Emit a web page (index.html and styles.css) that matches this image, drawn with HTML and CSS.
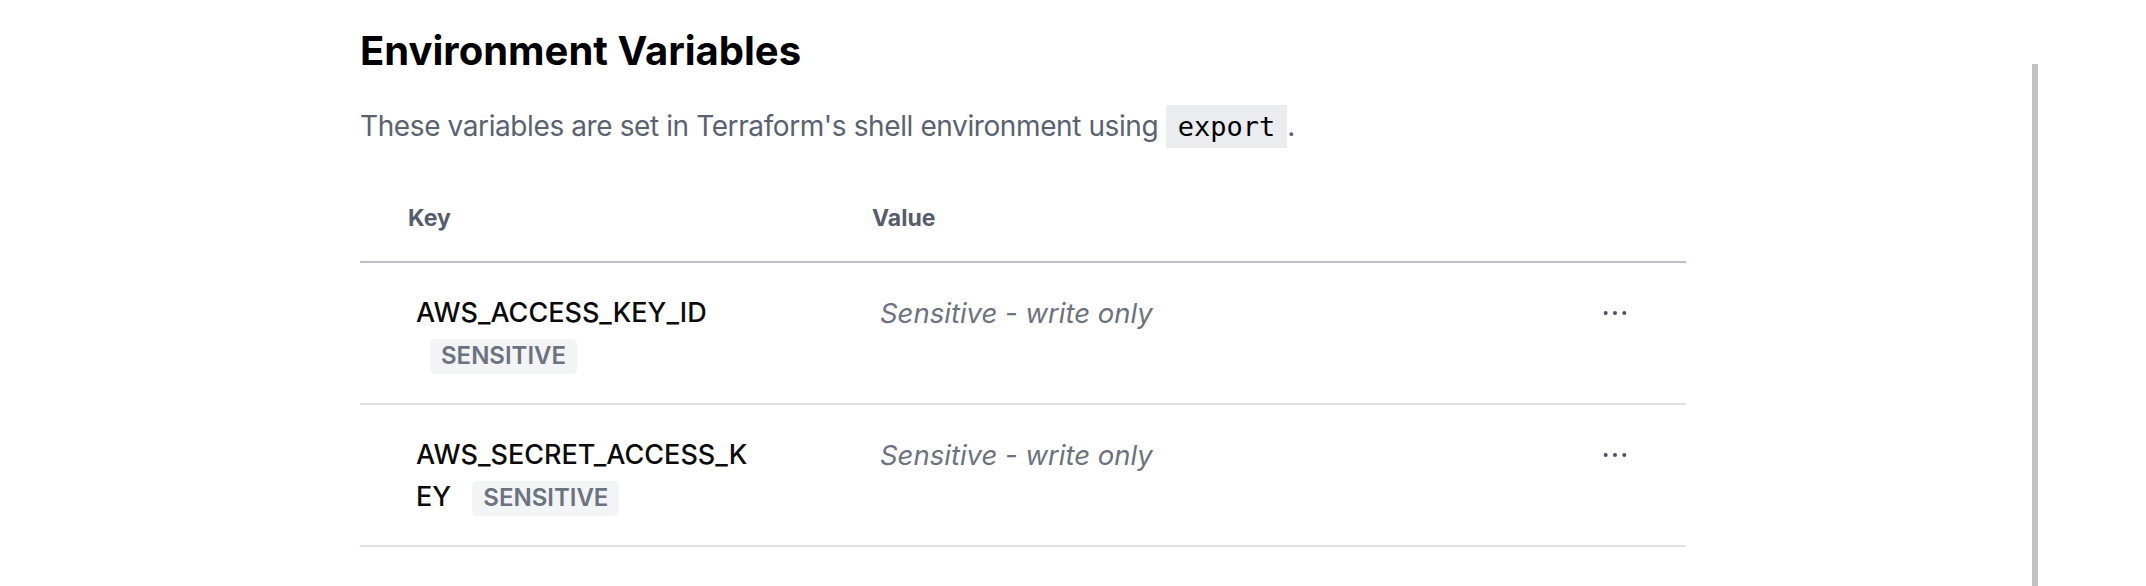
FILE: index.html
```html
<!DOCTYPE html>
<html lang="en">
<head>
  <meta charset="UTF-8" />
  <meta name="viewport" content="width=device-width, initial-scale=1.0"/>
  <title>Environment Variables</title>
  <link rel="stylesheet" href="styles.css">
</head>
<body>
  <main class="page">
    <h2 class="title">Environment Variables</h2>
    <p class="intro">These variables are set in Terraform's shell environment using <code>export</code>.</p>

    <table class="vars">
      <colgroup>
        <col class="col-key">
        <col class="col-value">
        <col class="col-actions">
      </colgroup>
      <thead>
        <tr>
          <th>Key</th>
          <th>Value</th>
          <th></th>
        </tr>
      </thead>
      <tbody>
        <tr>
          <td class="key"><span class="name">AWS_ACCESS_KEY_ID</span> <span class="badge">SENSITIVE</span></td>
          <td class="value">Sensitive - write only</td>
          <td class="actions">
            <button class="more" aria-label="More actions">
              <svg width="24" height="6" viewBox="0 0 24 6"><circle cx="2.7" cy="3" r="2"/><circle cx="12" cy="3" r="2"/><circle cx="21.3" cy="3" r="2"/></svg>
            </button>
          </td>
        </tr>
        <tr>
          <td class="key"><span class="name">AWS_SECRET_ACCESS_KEY</span> <span class="badge">SENSITIVE</span></td>
          <td class="value">Sensitive - write only</td>
          <td class="actions">
            <button class="more" aria-label="More actions">
              <svg width="24" height="6" viewBox="0 0 24 6"><circle cx="2.7" cy="3" r="2"/><circle cx="12" cy="3" r="2"/><circle cx="21.3" cy="3" r="2"/></svg>
            </button>
          </td>
        </tr>
      </tbody>
    </table>
  </main>

  <div class="scroll-thumb"></div>
</body>
</html>
```

FILE: styles.css
```css
body {
  margin: 0;
  background: #fff;
  font-family: Inter, "Noto Sans", sans-serif;
  color: #0b0b0c;
}
.page {
  width: 1326px;
  padding: 27px 0 0 360px;
}
.title {
  margin: 0 0 29px;
  font-size: 40px;
  line-height: 48px;
  font-weight: 700;
  color: #000;
}
.intro {
  margin: 0 0 27px;
  font-size: 28px;
  line-height: 44px;
  letter-spacing: -0.4px;
  color: #5a6272;
}
.intro code {
  font-family: "DejaVu Sans Mono", monospace;
  font-size: 27px;
  letter-spacing: 0;
  color: #000;
  background: #eaecf0;
  padding: 6px 12px;
}
.vars {
  width: 100%;
  border-collapse: collapse;
  table-layout: fixed;
}
.col-key {
  width: 464px;
}
.col-actions {
  width: 142px;
}
th {
  text-align: left;
  padding: 26px 0 26px 48px;
  font-size: 23px;
  line-height: 33px;
  font-weight: 700;
  color: #555d6b;
  border-bottom: 2px solid #b9c0cc;
}
td {
  vertical-align: top;
  padding: 29px 56px 27px;
  line-height: 42px;
  border-bottom: 2px solid #dde1e6;
}
.key {
  padding-right: 64px;
  font-size: 27px;
  font-weight: 500;
  color: #0b0b0c;
  word-break: break-all;
}
.badge {
  display: inline-block;
  margin-left: 14px;
  padding: 3px 11px 4px;
  font-size: 24px;
  line-height: 28px;
  font-weight: 600;
  color: #6b7280;
  background: #f3f4f6;
  border-radius: 5px;
  word-break: normal;
}
.value {
  font-size: 27.5px;
  font-style: italic;
  color: #6b7280;
}
.more {
  display: flex;
  align-items: center;
  justify-content: center;
  width: 30px;
  height: 42px;
  margin-left: auto;
  padding: 0;
  border: none;
  background: none;
  fill: #4b5160;
  cursor: pointer;
}
.scroll-thumb {
  position: fixed;
  top: 64px;
  bottom: 0;
  left: 2032px;
  width: 6px;
  background: #c1c1c1;
}
```
